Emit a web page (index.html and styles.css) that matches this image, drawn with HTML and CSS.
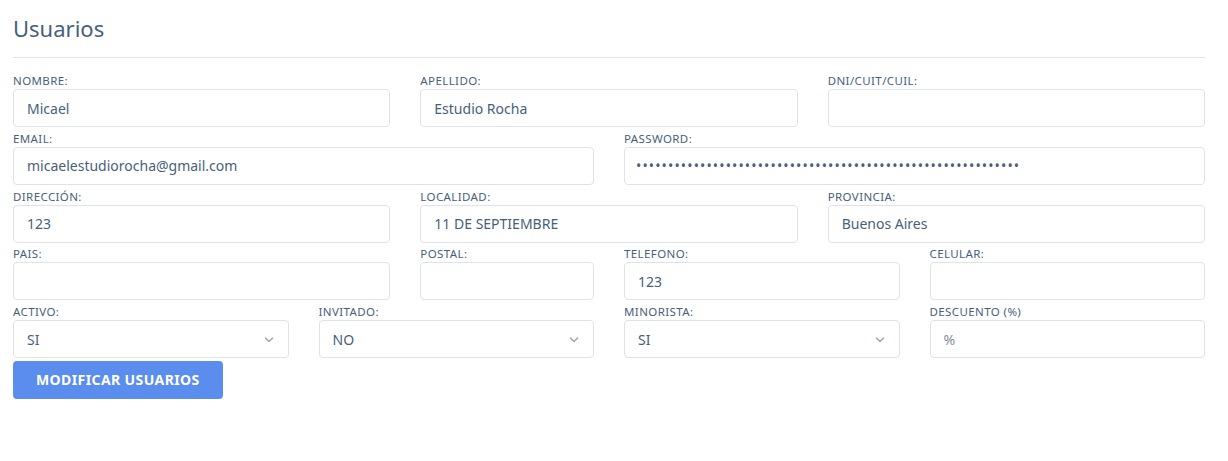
FILE: index.html
```html
<!DOCTYPE html>
<html lang="es">
<head>
<meta charset="utf-8">
<title>Usuarios</title>
<link rel="stylesheet" href="styles.css">
</head>
<body>
<div class="page">
  <h4 class="title">Usuarios</h4>
  <hr class="divider">
  <form class="form">
    <div class="grid">
      <div class="field span4"><label class="lbl">Nombre:</label><input class="ctl" type="text" value="Micael"></div>
      <div class="field span4"><label class="lbl">Apellido:</label><input class="ctl" type="text" value="Estudio Rocha"></div>
      <div class="field span4"><label class="lbl">DNI/CUIT/CUIL:</label><input class="ctl" type="text" value=""></div>

      <div class="field span6"><label class="lbl">Email:</label><input class="ctl" type="text" value="micaelestudiorocha@gmail.com"></div>
      <div class="field span6"><label class="lbl">Password:</label><input class="ctl pwd" type="password" value="xxxxxxxxxxxxxxxxxxxxxxxxxxxxxxxxxxxxxxxxxxxxxxxxxxxxxxxxxxxx"></div>

      <div class="field span4"><label class="lbl">Dirección:</label><input class="ctl" type="text" value="123"></div>
      <div class="field span4"><label class="lbl">Localidad:</label><input class="ctl" type="text" value="11 DE SEPTIEMBRE"></div>
      <div class="field span4"><label class="lbl">Provincia:</label><input class="ctl" type="text" value="Buenos Aires"></div>

      <div class="field span4"><label class="lbl">Pais:</label><input class="ctl" type="text" value=""></div>
      <div class="field span2"><label class="lbl">Postal:</label><input class="ctl" type="text" value=""></div>
      <div class="field span3"><label class="lbl">Telefono:</label><input class="ctl" type="text" value="123"></div>
      <div class="field span3"><label class="lbl">Celular:</label><input class="ctl" type="text" value=""></div>

      <div class="field span3"><label class="lbl">Activo:</label>
        <div class="sel-wrap"><select class="ctl sel"><option>SI</option><option>NO</option></select>
          <svg class="chev" width="10" height="6" viewBox="0 0 10 6"><path d="M1.5 1.2 L5 4.5 L8.5 1.2" fill="none" stroke="#a3abb6" stroke-width="1.6" stroke-linecap="round" stroke-linejoin="round"/></svg></div></div>
      <div class="field span3"><label class="lbl">Invitado:</label>
        <div class="sel-wrap"><select class="ctl sel"><option>NO</option><option>SI</option></select>
          <svg class="chev" width="10" height="6" viewBox="0 0 10 6"><path d="M1.5 1.2 L5 4.5 L8.5 1.2" fill="none" stroke="#a3abb6" stroke-width="1.6" stroke-linecap="round" stroke-linejoin="round"/></svg></div></div>
      <div class="field span3"><label class="lbl">Minorista:</label>
        <div class="sel-wrap"><select class="ctl sel"><option>SI</option><option>NO</option></select>
          <svg class="chev" width="10" height="6" viewBox="0 0 10 6"><path d="M1.5 1.2 L5 4.5 L8.5 1.2" fill="none" stroke="#a3abb6" stroke-width="1.6" stroke-linecap="round" stroke-linejoin="round"/></svg></div></div>
      <div class="field span3"><label class="lbl">Descuento (%)</label><input class="ctl" type="text" placeholder="%"></div>
    </div>
    <button class="btn" type="button">Modificar Usuarios</button>
  </form>
</div>
</body>
</html>
```

FILE: styles.css
```css
* { box-sizing: border-box; }
html, body { margin: 0; padding: 0; background: #ffffff; }
body {
  font-family: "Noto Sans", "Open Sans", sans-serif;
  color: #475f7b;
}
.page {
  padding: 15px 23px 0 13px;
}
.title {
  margin: 0;
  font-size: 22px;
  line-height: 26px;
  font-weight: 400;
  color: #475f7b;
}
.divider {
  margin: 16px 0 0 0;
  border: 0;
  border-top: 1px solid #dfe3e7;
  height: 0;
}
.form {
  padding-top: 15px;
}
.grid {
  display: grid;
  grid-template-columns: repeat(12, 1fr);
  column-gap: 30px;
  row-gap: 3.75px;
}
.span2 { grid-column: span 2; }
.span3 { grid-column: span 3; }
.span4 { grid-column: span 4; }
.span6 { grid-column: span 6; }
.field {
  display: flex;
  flex-direction: column;
  min-width: 0;
}
.lbl {
  display: block;
  font-size: 11.5px;
  line-height: 16px;
  letter-spacing: 0.4px;
  text-transform: uppercase;
  color: #475f7b;
}
.ctl {
  display: block;
  width: 100%;
  height: 38px;
  margin: 0;
  padding: 0 13px;
  border: 1px solid #dfe3e7;
  border-radius: 4px;
  background: #ffffff;
  font-family: "Noto Sans", "Open Sans", sans-serif;
  font-size: 14px;
  color: #475f7b;
  outline: none;
}
.ctl::placeholder { color: #828d99; }
.pwd {
  letter-spacing: 1.14px;
  padding-left: 11px;
}
.sel-wrap {
  position: relative;
}
.sel {
  appearance: none;
  -webkit-appearance: none;
}
.chev {
  position: absolute;
  right: 15px;
  top: 17px;
  pointer-events: none;
}
.btn {
  display: block;
  margin-top: 3px;
  height: 37.5px;
  padding: 0 23px;
  border: 0;
  border-radius: 4px;
  background: #5a8dee;
  color: #ffffff;
  font-family: "Noto Sans", "Open Sans", sans-serif;
  font-weight: 700;
  font-size: 14px;
  letter-spacing: 0.4px;
  text-transform: uppercase;
}
```
